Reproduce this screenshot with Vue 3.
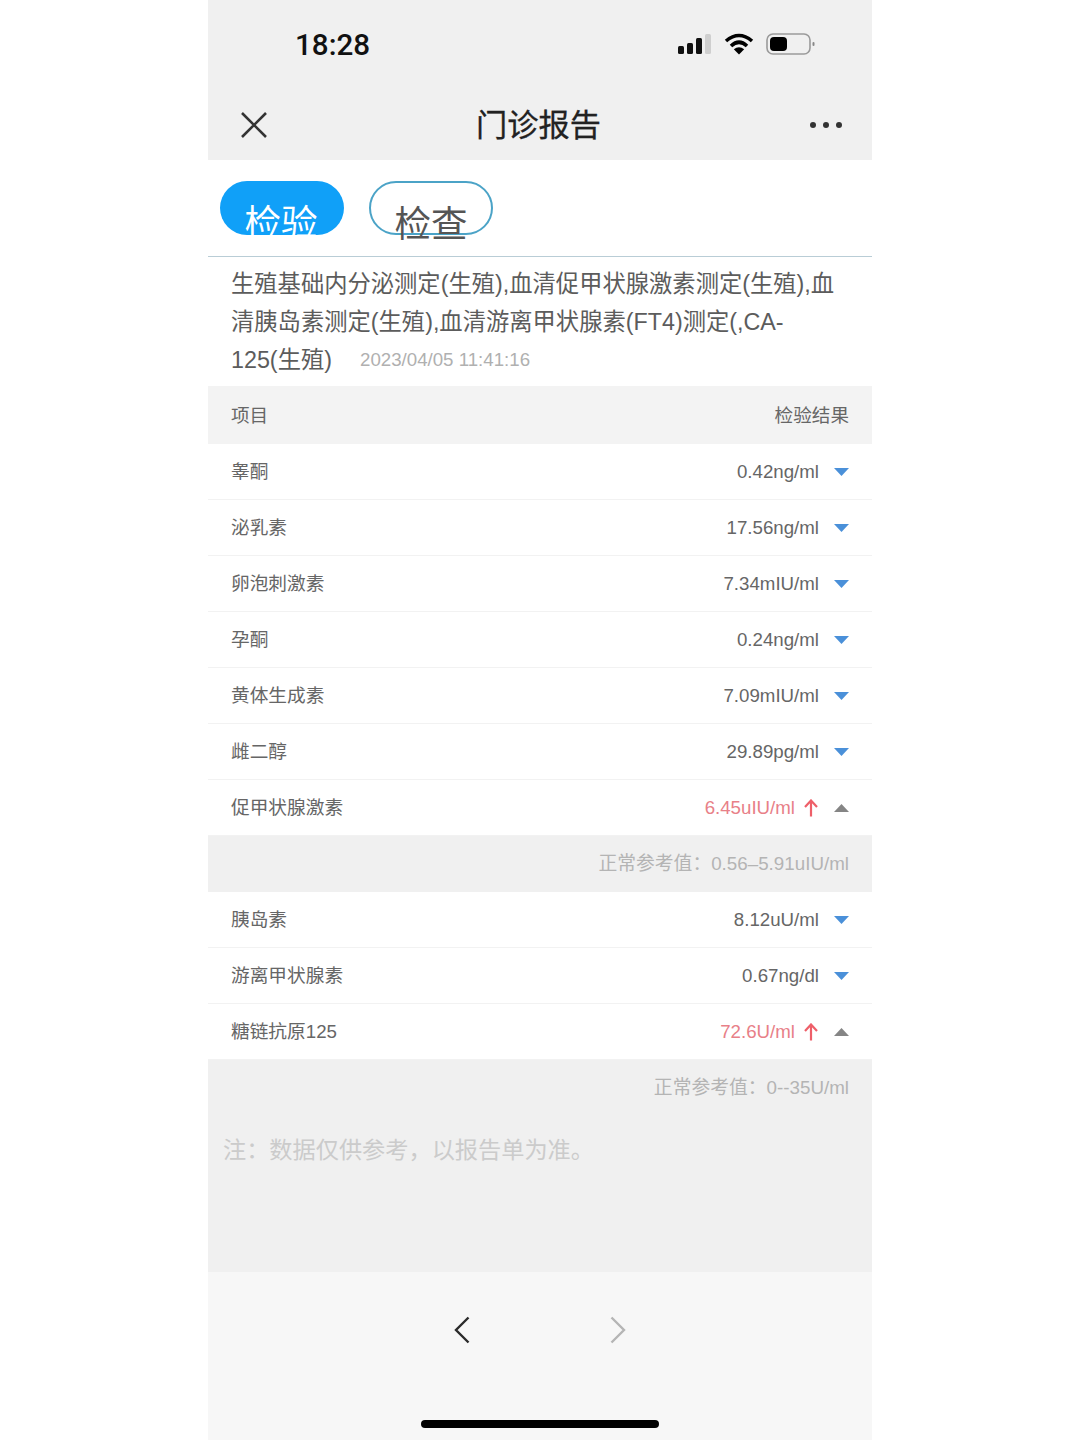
<script setup>
const rowsA = [
  { name: '睾酮', value: '0.42ng/ml' },
  { name: '泌乳素', value: '17.56ng/ml' },
  { name: '卵泡刺激素', value: '7.34mIU/ml' },
  { name: '孕酮', value: '0.24ng/ml' },
  { name: '黄体生成素', value: '7.09mIU/ml' },
  { name: '雌二醇', value: '29.89pg/ml' },
  { name: '促甲状腺激素', value: '6.45uIU/ml', high: true, range: '正常参考值\uFF1A0.56\u20135.91uIU/ml' },
  { name: '胰岛素', value: '8.12uU/ml' },
  { name: '游离甲状腺素', value: '0.67ng/dl' },
  { name: '糖链抗原125', value: '72.6U/ml', high: true, range: '正常参考值\uFF1A0--35U/ml' },
]
const note = '注\uFF1A数据仅供参考\uFF0C以报告单为准\u3002'
</script>

<template>
  <div class="phone">
    <header class="top">
      <div class="status">
        <span class="time">18:28</span>
        <div class="status-icons">
          <svg width="34" height="22" viewBox="0 0 34 22">
            <rect x="0" y="13" width="6" height="8" rx="1.5" fill="#111" />
            <rect x="9" y="10" width="6" height="11" rx="1.5" fill="#111" />
            <rect x="18" y="5" width="6" height="16" rx="1.5" fill="#111" />
            <rect x="27" y="1" width="6" height="20" rx="1.5" fill="#cfcfcf" />
          </svg>
          <svg width="30" height="22" viewBox="0 0 30 22">
            <path d="M2 8 Q15 -3 28 8" fill="none" stroke="#000" stroke-width="3.6" />
            <path d="M7 13 Q15 5.5 23 13" fill="none" stroke="#000" stroke-width="3.6" />
            <path d="M15 21.5 L9.8 16.3 Q15 12 20.2 16.3 Z" fill="#000" />
          </svg>
          <svg width="50" height="22" viewBox="0 0 50 22">
            <rect x="1" y="1" width="43" height="20" rx="6" fill="none" stroke="#9a9a9a" stroke-width="1.6" />
            <rect x="4" y="4" width="17" height="14" rx="4" fill="#000" />
            <rect x="46.500" y="9" width="2" height="4" rx="1" fill="#888" />
          </svg>
        </div>
      </div>
      <div class="nav">
        <svg class="close" width="28" height="28" viewBox="0 0 28 28">
          <path d="M2 2 L26 26 M26 2 L2 26" stroke="#333" stroke-width="2.6" fill="none" />
        </svg>
        <h1 class="title">门诊报告</h1>
        <div class="dots"><i></i><i></i><i></i></div>
      </div>
    </header>

    <div class="tabs">
      <div class="tab active">检验</div>
      <div class="tab">检查</div>
    </div>

    <div class="desc">
      <div class="line">生殖基础内分泌测定(生殖),血清促甲状腺激素测定(生殖),血</div>
      <div class="line">清胰岛素测定(生殖),血清游离甲状腺素(FT4)测定(,CA-</div>
      <div class="line"><span>125(生殖)</span><span class="date">2023/04/05 11:41:16</span></div>
    </div>

    <div class="head">
      <span class="cjk">项目</span>
      <span class="cjk">检验结果</span>
    </div>

    <template v-for="row in rowsA" :key="row.name">
      <div class="row">
        <span class="cjk">{{ row.name }}</span>
        <div class="result">
          <span class="value" :class="{ high: row.high }">{{ row.value }}</span>
          <svg v-if="row.high" class="up" width="14" height="18" viewBox="0 0 14 18">
            <path d="M7 17.500 V2 M1 8 L7 1.500 L13 8" fill="none" stroke="#ee5f69" stroke-width="2.200" />
          </svg>
          <svg class="caret" width="15" height="8" viewBox="0 0 15 8">
            <path v-if="row.high" d="M0 8 L7.500 0 L15 8 Z" fill="#858585" />
            <path v-else d="M0 0 L15 0 L7.500 8 Z" fill="#4a90d9" />
          </svg>
        </div>
      </div>
      <div v-if="row.range" class="range">{{ row.range }}</div>
    </template>

    <div class="note-area">
      <p class="note">{{ note }}</p>
    </div>

    <footer class="bottom">
      <div class="arrows">
        <svg width="16" height="28" viewBox="0 0 16 28">
          <path d="M14.500 1.500 L2 14 L14.500 26.500" fill="none" stroke="#2b2b2b" stroke-width="2.400" />
        </svg>
        <svg width="16" height="28" viewBox="0 0 16 28">
          <path d="M1.500 1.500 L14 14 L1.500 26.500" fill="none" stroke="#b5b5b5" stroke-width="2.400" />
        </svg>
      </div>
      <div class="indicator"></div>
    </footer>
  </div>
</template>

<style>
body { background: #fff; }
</style>

<style scoped>
.phone {
  width: 664px;
  height: 1440px;
  margin: 0 auto;
  overflow: hidden;
  background: #fff;
  display: flex;
  flex-direction: column;
  font-family: "Liberation Sans", "Noto Sans CJK SC", sans-serif;
  color: #555;
}
.top { background: #f0f0f0; height: 160px; flex: none; }
.status {
  height: 88px;
  box-sizing: border-box;
  padding: 2px 56px 0 87px;
  display: flex;
  align-items: center;
  justify-content: space-between;
}
.time {
  font-family: Roboto, "Liberation Sans", sans-serif;
  font-size: 29.600px;
  font-weight: 500;
  color: #111;
}
.status-icons { display: flex; align-items: center; gap: 12px; margin-bottom: 2px; }
.nav {
  height: 72px;
  box-sizing: border-box;
  padding: 2px 30px 0 32px;
  display: flex;
  align-items: center;
  justify-content: space-between;
}
.close { flex: none; }
.title {
  margin: 0 0 0 -1px;
  padding-top: 2px;
  font-size: 31.200px;
  font-weight: 400;
  color: #222;
  line-height: 68px;
  -webkit-text-stroke: 0.3px #222;
}
.dots { display: flex; gap: 7px; }
.dots i { width: 6px; height: 6px; border-radius: 50%; background: #333; display: block; }

.tabs {
  flex: none;
  height: 97px;
  box-sizing: border-box;
  padding: 21px 0 0 12px;
  display: flex;
  gap: 25px;
  border-bottom: 1px solid #b9cdd6;
}
.tab {
  width: 124px;
  height: 54px;
  box-sizing: border-box;
  border: 2px solid #4ba3c7;
  border-radius: 27px;
  font-size: 36.500px;
  line-height: 84px;
  text-align: center;
  color: #555;
}
.tab.active {
  background: #10a0f8;
  border: 0;
  line-height: 86px;
  color: #fff;
  overflow: hidden;
  text-indent: -2px;
}

.desc {
  flex: none;
  box-sizing: border-box;
  height: 129px;
  padding: 8px 23px 0;
  font-size: 23.300px;
  line-height: 38px;
  color: #5c5c5c;
}
.line { white-space: nowrap; display: flex; align-items: center; }
.date { margin: 0 0 0 28px; font-size: 18.700px; line-height: 36px; color: #b0b0b0; }

.head {
  flex: none;
  height: 58px;
  background: #f3f3f3;
  display: flex;
  align-items: center;
  justify-content: space-between;
  padding: 0 23px;
  font-size: 18.600px;
  color: #666;
}
.cjk { margin-bottom: 4px; }
.row {
  flex: none;
  height: 56px;
  box-sizing: border-box;
  border-bottom: 1px solid #f2f2f2;
  display: flex;
  align-items: center;
  justify-content: space-between;
  padding: 0 23px;
  font-size: 18.700px;
  color: #666;
}
.result { display: flex; align-items: center; }
.value { color: #666; }
.value.high { color: #e88088; }
.up { margin-left: 9px; }
.caret { margin-left: 15px; }
.up + .caret { margin-left: 16px; }
.range {
  flex: none;
  height: 56px;
  box-sizing: border-box;
  padding: 0 23px 6px;
  background: #f0f0f0;
  display: flex;
  align-items: center;
  justify-content: flex-end;
  font-size: 18.800px;
  color: #b4b4b4;
}
.note-area {
  flex: none;
  height: 156px;
  background: #f0f0f0;
  padding: 0 15px;
}
.note {
  margin: 0;
  padding-top: 16px;
  font-size: 23.200px;
  line-height: 36px;
  color: #cbcbcb;
}
.bottom { flex: 1; background: #f7f7f7; display: flex; flex-direction: column; align-items: center; }
.arrows {
  width: 172px;
  height: 116px;
  display: flex;
  align-items: center;
  justify-content: space-between;
}
.indicator { width: 238px; height: 8px; border-radius: 4px; background: #000; margin-top: 32px; }
</style>
